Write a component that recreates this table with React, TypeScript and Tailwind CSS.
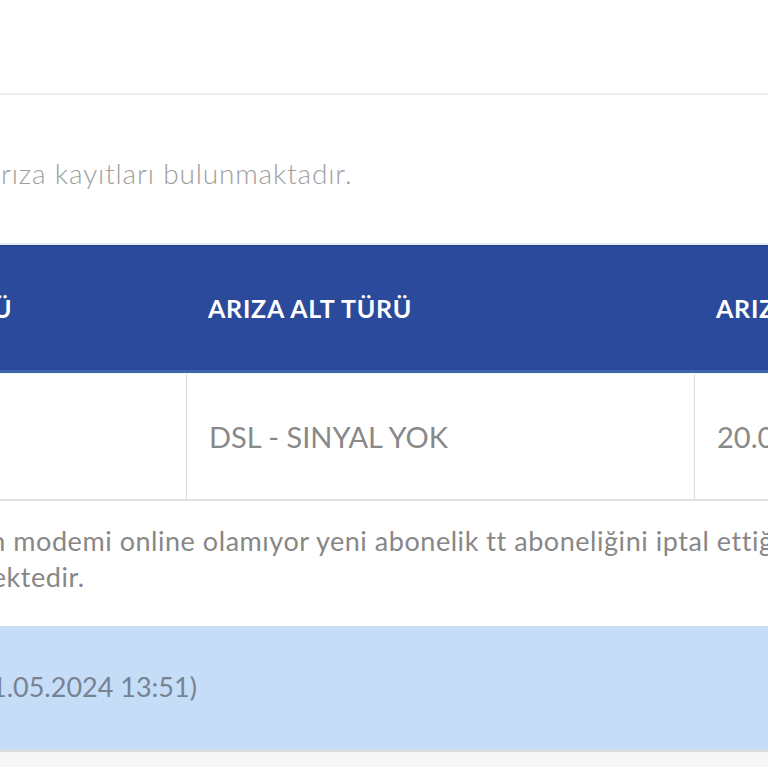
import React from "react";

const columns = [
    { title: "ARIZA TÜRÜ", value: "İNTERNET", width: "w-[349px]" },
    { title: "ARIZA ALT TÜRÜ", value: "DSL - SINYAL YOK", width: "w-[508px]" },
    { title: "ARIZA TARİHİ", value: "20.05.2024 16:42", width: "w-[360px]" },
];

export default function App() {
    return (
        <main className="h-[768px] w-[768px] overflow-hidden bg-white font-['Lato','Open_Sans',sans-serif]">
            <div className="h-[93px]" />
            <div className="h-[2px] bg-[#ececec]" />

            {/* bilgi metni */}
            <section className="h-[148px] pt-[60px]">
                <p className="-ml-[76px] whitespace-nowrap text-[28px] font-light leading-9 tracking-[0.03em] text-[#9e9e9e]">
                    Açık arıza kayıtları bulunmaktadır.
                </p>
            </section>
            <div className="h-[2px] bg-[#e4ecf7]" />

            {/* tablo */}
            <div className="-ml-[163px] w-[1217px]">
                <div className="flex h-[128px] border-t-[2px] border-b-[3px] border-t-[#25448f] border-b-[#3f64a8] bg-[#2b4a9b]">
                    {columns.map((col) => (
                        <div key={col.title} className={`${col.width} flex items-center px-[22px]`}>
                            <span className="whitespace-nowrap text-[25px] font-bold tracking-[0.03em] text-white">
                                {col.title}
                            </span>
                        </div>
                    ))}
                </div>
                <div className="flex h-[128px] border-t border-b-[2px] border-t-[#eef8fc] border-b-[#e0e0e0]">
                    {columns.map((col, i) => (
                        <div
                            key={col.title}
                            className={`${col.width} flex items-center px-[22px] ${i > 0 ? "border-l border-[#dcdcdc]" : ""}`}
                        >
                            <span className="whitespace-nowrap text-[29px] text-[#898989]">{col.value}</span>
                        </div>
                    ))}
                </div>
            </div>

            {/* açıklama */}
            <section className="h-[125px] pt-[22px]">
                <p className="-ml-[113px] whitespace-nowrap text-[27px] leading-[36px] tracking-[0.02em] text-[#878787]">
                    Abonenin modemi online olamıyor yeni abonelik tt aboneliğini iptal ettiği için kontrol edilmesi
                    <br />
                    beklenmektedir.
                </p>
            </section>

            {/* durum */}
            <div className="flex h-[123px] items-center bg-[#c5ddf7]">
                <span className="-ml-[170px] whitespace-nowrap text-[27px] text-[#778293]">
                    Kayıt Tarihi (21.05.2024 13:51)
                </span>
            </div>
            <div className="h-[3px] bg-[#d7dce2]" />
            <div className="h-[15px] bg-[#f6f6f6]" />
        </main>
    );
}
